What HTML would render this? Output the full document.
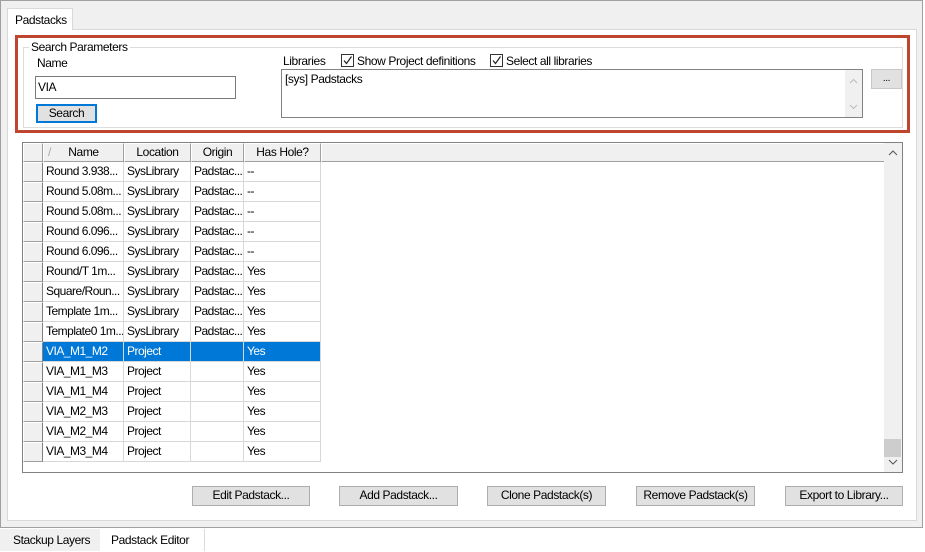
<!DOCTYPE html>
<html><head><meta charset="utf-8"><style>
*{box-sizing:border-box;margin:0;padding:0}
body{width:925px;height:552px;background:#fff;font-family:"Liberation Sans",sans-serif;font-size:12px;color:#000;position:relative;overflow:hidden}
.a{position:absolute}
.t{white-space:nowrap;letter-spacing:-0.4px}
.btn{position:absolute;background:#e1e1e1;border:1px solid #adadad;text-align:center;line-height:17px;letter-spacing:-0.4px}
.cell{position:absolute;height:20px;border-right:1px solid #d8d8d8;border-bottom:1px solid #d8d8d8;line-height:19px;padding-left:3px;white-space:nowrap;overflow:hidden;letter-spacing:-0.5px}
.rh{position:absolute;left:23px;width:20px;height:20px;background:#f0f0f0;border-right:1px solid #808080;border-bottom:1px solid #a0a0a0;border-left:1px solid #fff;border-top:1px solid #fff}
.hd{position:absolute;top:143px;height:19px;background:#f0f0f0;border-right:1px solid #a0a0a0;border-bottom:1px solid #a0a0a0;border-top:1px solid #fff;border-left:1px solid #fff;text-align:center;line-height:17px;letter-spacing:-0.4px}
.cb{position:absolute;width:13px;height:13px;border:1px solid #333;background:#fff}
</style></head><body>
<div class="a" style="left:0;top:0;width:923px;height:528px;background:#f0f0f0;border:1px solid #a0a0a0"></div>
<div class="a t" style="left:7px;top:8px;width:66px;height:22px;background:#fff;border:1px solid #d9d9d9;border-bottom:none;padding:4px 0 0 7px">Padstacks</div>
<div class="a" style="left:7px;top:29px;width:910px;height:492px;background:#fff;border:1px solid #d9d9d9"></div>
<div class="a" style="left:8px;top:29px;width:64px;height:2px;background:#fff"></div>
<div class="a" style="left:15px;top:35px;width:895px;height:98px;border:3px solid #c0452f"></div>
<div class="a" style="left:23px;top:47px;width:880px;height:81px;border:1px solid #dcdcdc"></div>
<div class="a t" style="left:29px;top:40px;background:#fff;padding:0 2px">Search Parameters</div>
<div class="a t" style="left:37px;top:56px">Name</div>
<div class="a t" style="left:35px;top:76px;width:201px;height:23px;border:1px solid #7a7a7a;padding:3px 0 0 2px">VIA</div>
<div class="btn" style="left:36px;top:104px;width:61px;height:19px;border:2px solid #0078d7;line-height:15px">Search</div>
<div class="a t" style="left:283px;top:54px">Libraries</div>
<div class="cb" style="left:341px;top:54px"></div>
<svg class="a" style="left:341px;top:54px" width="13" height="13"><path d="M3 6.5 L5.5 9.5 L10.5 2.5" stroke="#222" stroke-width="1.2" fill="none"/></svg>
<div class="a t" style="left:357px;top:54px">Show Project definitions</div>
<div class="cb" style="left:490px;top:54px"></div>
<svg class="a" style="left:490px;top:54px" width="13" height="13"><path d="M3 6.5 L5.5 9.5 L10.5 2.5" stroke="#222" stroke-width="1.2" fill="none"/></svg>
<div class="a t" style="left:506px;top:54px">Select all libraries</div>
<div class="a t" style="left:281px;top:69px;width:582px;height:49px;border:1px solid #828282;padding:2px 0 0 3px">[sys] Padstacks</div>
<div class="a" style="left:845px;top:70px;width:17px;height:47px;background:#f0f0f0"></div>
<svg class="a" style="left:845px;top:70px" width="17" height="47"><path d="M5 13 L8.5 9.5 L12 13" stroke="#bbb" fill="none"/><path d="M5 35 L8.5 38.5 L12 35" stroke="#bbb" fill="none"/></svg>
<div class="btn" style="left:871px;top:69px;width:31px;height:20px;border-color:#c8c8c8;line-height:18px;font-size:10px">...</div>
<div class="a" style="left:22px;top:142px;width:881px;height:331px;background:#fff;border:1px solid #828282"></div>
<div class="a" style="left:884px;top:143px;width:18px;height:329px;background:#f0f0f0"></div>
<div class="a" style="left:884px;top:439px;width:17px;height:18px;background:#cdcdcd"></div>
<svg class="a" style="left:884px;top:143px" width="18" height="329"><path d="M5 12 L9 8 L13 12" stroke="#555" fill="none"/><path d="M5 317 L9 321 L13 317" stroke="#555" fill="none"/></svg>
<div class="hd" style="left:23px;width:20px"></div>
<div class="hd" style="left:43px;width:81px"><span style="position:absolute;left:4px;color:#aaa">/</span>Name</div>
<div class="hd" style="left:124px;width:67px">Location</div>
<div class="hd" style="left:191px;width:53px">Origin</div>
<div class="hd" style="left:244px;width:77px">Has Hole?</div>
<div class="hd" style="left:321px;width:563px;border-right:none"></div>
<div id="rows"></div>
<script>
var d=[["Round 3.938...","SysLibrary","Padstac...","--"],["Round 5.08m...","SysLibrary","Padstac...","--"],["Round 5.08m...","SysLibrary","Padstac...","--"],["Round 6.096...","SysLibrary","Padstac...","--"],["Round 6.096...","SysLibrary","Padstac...","--"],["Round/T 1m...","SysLibrary","Padstac...","Yes"],["Square/Roun...","SysLibrary","Padstac...","Yes"],["Template 1m...","SysLibrary","Padstac...","Yes"],["Template0 1m...","SysLibrary","Padstac...","Yes"],["VIA_M1_M2","Project","","Yes"],["VIA_M1_M3","Project","","Yes"],["VIA_M1_M4","Project","","Yes"],["VIA_M2_M3","Project","","Yes"],["VIA_M2_M4","Project","","Yes"],["VIA_M3_M4","Project","","Yes"]];
var x=[43,124,191,244],w=[81,67,53,77],h="";
d.forEach(function(r,i){var y=162+i*20,s=i==9;h+='<div class="rh" style="top:'+y+'px"></div>';
r.forEach(function(c,j){h+='<div class="cell" style="left:'+x[j]+'px;top:'+y+'px;width:'+w[j]+'px;'+(s?'background:#0078d7;color:#fff;':'')+'">'+c+'</div>'});});
document.getElementById("rows").innerHTML=h;
</script>
<div class="btn" style="left:192px;top:486px;width:118px;height:20px">Edit Padstack...</div>
<div class="btn" style="left:339px;top:486px;width:119px;height:20px">Add Padstack...</div>
<div class="btn" style="left:487px;top:486px;width:119px;height:20px">Clone Padstack(s)</div>
<div class="btn" style="left:636px;top:486px;width:119px;height:20px">Remove Padstack(s)</div>
<div class="btn" style="left:785px;top:486px;width:118px;height:20px">Export to Library...</div>
<div class="a t" style="left:0;top:529px;width:100px;height:22px;background:#f0f0f0;padding:4px 0 0 13px">Stackup Layers</div>
<div class="a t" style="left:100px;top:529px;width:105px;height:22px;background:#fff;border-right:1px solid #d9d9d9;padding:4px 0 0 11px">Padstack Editor</div>
</body></html>
